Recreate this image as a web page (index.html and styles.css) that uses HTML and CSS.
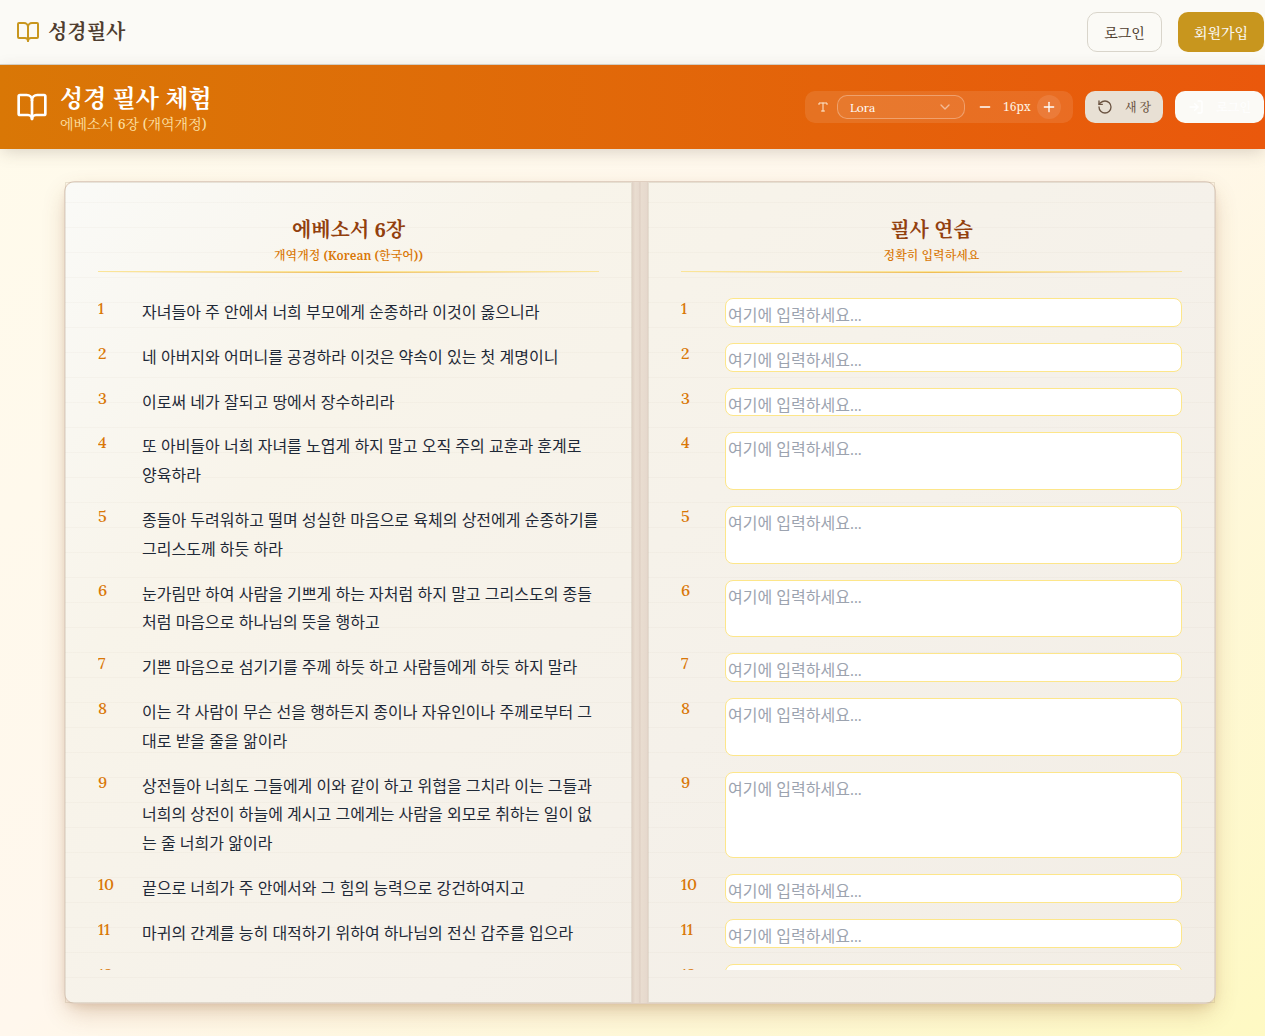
FILE: index.html
```html
<!DOCTYPE html>
<html lang="ko">
<head>
<meta charset="utf-8">
<meta name="viewport" content="width=device-width, initial-scale=1">
<title>성경필사</title>
<link rel="stylesheet" href="styles.css">
</head>
<body>
<header class="site-header">
  <a class="brand" href="#">
    <svg class="icon icon-24" viewBox="0 0 24 24"><path d="M12 7v14"/><path d="M3 18a1 1 0 0 1-1-1V4a1 1 0 0 1 1-1h5a4 4 0 0 1 4 4 4 4 0 0 1 4-4h5a1 1 0 0 1 1 1v13a1 1 0 0 1-1 1h-6a3 3 0 0 0-3 3 3 3 0 0 0-3-3z"/></svg>
    <span>성경필사</span>
  </a>
  <nav class="account">
    <button class="btn btn-outline" type="button">로그인</button>
    <button class="btn btn-gold" type="button">회원가입</button>
  </nav>
</header>

<section class="banner">
  <div class="banner-title">
    <svg class="icon icon-32" viewBox="0 0 24 24"><path d="M12 7v14"/><path d="M3 18a1 1 0 0 1-1-1V4a1 1 0 0 1 1-1h5a4 4 0 0 1 4 4 4 4 0 0 1 4-4h5a1 1 0 0 1 1 1v13a1 1 0 0 1-1 1h-6a3 3 0 0 0-3 3 3 3 0 0 0-3-3z"/></svg>
    <div>
      <h1>성경 필사 체험</h1>
      <p>에베소서 6장 (개역개정)</p>
    </div>
  </div>
  <div class="tools">
    <div class="font-tools">
      <svg class="icon icon-12" viewBox="0 0 24 24"><path d="M4 7V4h16v3"/><path d="M9 20h6"/><path d="M12 4v16"/></svg>
      <div class="font-select">
        <select aria-label="글꼴"><option>Lora</option></select>
        <svg class="icon icon-16" viewBox="0 0 24 24"><path d="m6 9 6 6 6-6"/></svg>
      </div>
      <div class="size-tools">
        <button class="round" type="button" aria-label="글자 작게"><svg class="icon icon-16" viewBox="0 0 24 24"><path d="M5 12h14"/></svg></button>
        <span class="size-value">16px</span>
        <button class="round round-filled" type="button" aria-label="글자 크게"><svg class="icon icon-16" viewBox="0 0 24 24"><path d="M5 12h14"/><path d="M12 5v14"/></svg></button>
      </div>
    </div>
    <button class="tool-btn tool-new" type="button"><svg class="icon icon-16" viewBox="0 0 24 24"><path d="M3 12a9 9 0 1 0 9-9 9.75 9.75 0 0 0-6.74 2.74L3 8"/><path d="M3 3v5h5"/></svg>새 장</button>
    <button class="tool-btn tool-login" type="button"><svg class="icon icon-16" viewBox="0 0 24 24"><path d="M15 3h4a2 2 0 0 1 2 2v14a2 2 0 0 1-2 2h-4"/><path d="m10 17 5-5-5-5"/><path d="M15 12H3"/></svg>로그인</button>
  </div>
</section>

<main class="desk">
  <div class="book">
    <section class="page">
      <header class="page-head">
        <h2>에베소서 6장</h2>
        <p>개역개정 (Korean (한국어))</p>
      </header>
      <ol class="verses">
        <li><span class="num">1</span><p>자녀들아 주 안에서 너희 부모에게 순종하라 이것이 옳으니라</p></li>
        <li><span class="num">2</span><p>네 아버지와 어머니를 공경하라 이것은 약속이 있는 첫 계명이니</p></li>
        <li><span class="num">3</span><p>이로써 네가 잘되고 땅에서 장수하리라</p></li>
        <li><span class="num">4</span><p>또 아비들아 너희 자녀를 노엽게 하지 말고 오직 주의 교훈과 훈계로 양육하라</p></li>
        <li><span class="num">5</span><p>종들아 두려워하고 떨며 성실한 마음으로 육체의 상전에게 순종하기를 그리스도께 하듯 하라</p></li>
        <li><span class="num">6</span><p>눈가림만 하여 사람을 기쁘게 하는 자처럼 하지 말고 그리스도의 종들처럼 마음으로 하나님의 뜻을 행하고</p></li>
        <li><span class="num">7</span><p>기쁜 마음으로 섬기기를 주께 하듯 하고 사람들에게 하듯 하지 말라</p></li>
        <li><span class="num">8</span><p>이는 각 사람이 무슨 선을 행하든지 종이나 자유인이나 주께로부터 그대로 받을 줄을 앎이라</p></li>
        <li><span class="num">9</span><p>상전들아 너희도 그들에게 이와 같이 하고 위협을 그치라 이는 그들과 너희의 상전이 하늘에 계시고 그에게는 사람을 외모로 취하는 일이 없는 줄 너희가 앎이라</p></li>
        <li><span class="num">10</span><p>끝으로 너희가 주 안에서와 그 힘의 능력으로 강건하여지고</p></li>
        <li><span class="num">11</span><p>마귀의 간계를 능히 대적하기 위하여 하나님의 전신 갑주를 입으라</p></li>
        <li><span class="num">12</span><p>우리의 씨름은 혈과 육을 상대하는 것이 아니요</p></li>
      </ol>
    </section>
    <div class="spine"></div>
    <section class="page">
      <header class="page-head">
        <h2>필사 연습</h2>
        <p>정확히 입력하세요</p>
      </header>
      <ol class="verses">
        <li><label class="num" for="v1">1</label><textarea id="v1" placeholder="여기에 입력하세요..."></textarea></li>
        <li><label class="num" for="v2">2</label><textarea id="v2" placeholder="여기에 입력하세요..."></textarea></li>
        <li><label class="num" for="v3">3</label><textarea id="v3" placeholder="여기에 입력하세요..."></textarea></li>
        <li><label class="num" for="v4">4</label><textarea id="v4" class="lines-2" placeholder="여기에 입력하세요..."></textarea></li>
        <li><label class="num" for="v5">5</label><textarea id="v5" class="lines-2" placeholder="여기에 입력하세요..."></textarea></li>
        <li><label class="num" for="v6">6</label><textarea id="v6" class="lines-2" placeholder="여기에 입력하세요..."></textarea></li>
        <li><label class="num" for="v7">7</label><textarea id="v7" placeholder="여기에 입력하세요..."></textarea></li>
        <li><label class="num" for="v8">8</label><textarea id="v8" class="lines-2" placeholder="여기에 입력하세요..."></textarea></li>
        <li><label class="num" for="v9">9</label><textarea id="v9" class="lines-3" placeholder="여기에 입력하세요..."></textarea></li>
        <li><label class="num" for="v10">10</label><textarea id="v10" placeholder="여기에 입력하세요..."></textarea></li>
        <li><label class="num" for="v11">11</label><textarea id="v11" placeholder="여기에 입력하세요..."></textarea></li>
        <li><label class="num" for="v12">12</label><textarea id="v12" placeholder="여기에 입력하세요..."></textarea></li>
      </ol>
    </section>
  </div>
</main>
</body>
</html>
```
FILE: styles.css
```css
:root {
  --serif: "Noto Serif", "Noto Serif CJK KR", serif;
  --lora: "Lora", "Noto Sans CJK KR", sans-serif;
}
* { box-sizing: border-box; margin: 0; padding: 0; }
body {
  display: flex;
  flex-direction: column;
  height: 100vh;
  overflow: hidden;
  font-family: var(--serif);
  color: #4f3d2f;
  background: linear-gradient(to bottom right, #fffbeb, #fff7ed 50%, #fef9c3);
}
button, select, textarea { font: inherit; color: inherit; border: 0; background: none; }
button { cursor: pointer; }
.icon { flex: none; fill: none; stroke: currentColor; stroke-width: 2; stroke-linecap: round; stroke-linejoin: round; }
.icon-12 { width: 12px; height: 12px; }
.icon-16 { width: 16px; height: 16px; }
.icon-24 { width: 24px; height: 24px; }
.icon-32 { width: 32px; height: 32px; }

.site-header {
  display: flex;
  align-items: center;
  justify-content: space-between;
  padding: 12px 1px 12px 16px;
  background: #fbfaf6;
  border-bottom: 1px solid #d9d5cb;
}
.brand { display: flex; align-items: center; gap: 8px; font-size: 20px; line-height: 30px; font-weight: 700; color: inherit; text-decoration: none; }
.brand .icon { color: #c8961e; }
.account { display: flex; gap: 16px; }
.btn { height: 40px; padding: 2px 16px 0; border-radius: 10px; font-size: 14px; line-height: 20px; font-weight: 500; }
.btn-outline { border: 1px solid #d9d5cb; }
.btn-gold { background: #c8961e; color: #fbfaf6; }

.banner {
  position: relative;
  display: flex;
  align-items: center;
  justify-content: space-between;
  padding: 16px 1px 16px 16px;
  color: #fff;
  background: linear-gradient(to right, #d97706, #ea580c);
  box-shadow: 0 4px 16px -2px rgba(74, 58, 44, .22);
}
.banner-title { display: flex; align-items: center; gap: 12px; }
.banner h1 { font-size: 24px; line-height: 34px; font-weight: 700; }
.banner p { font-size: 14px; line-height: 18px; color: #fde2a8; }
.tools { display: flex; align-items: center; gap: 12px; }
.font-tools { display: flex; align-items: center; gap: 8px; height: 32px; padding: 0 12px; border-radius: 10px; background: rgba(255, 255, 255, .1); }
.font-tools > .icon { color: #fde8d0; }
.font-select { position: relative; color: #fff; }
.font-select select { display: block; width: 128px; height: 24px; padding: 0 12px; appearance: none; border: 1px solid rgba(255, 255, 255, .3); border-radius: 10px; font-family: var(--lora); font-size: 12px; background: rgba(255, 255, 255, .05); }
.font-select .icon { position: absolute; right: 12px; top: 4px; opacity: .5; pointer-events: none; }
.size-tools { display: flex; align-items: center; }
.round { display: grid; place-items: center; width: 24px; height: 24px; border-radius: 12px; }
.round-filled { background: rgba(255, 255, 255, .1); }
.size-value { width: 40px; text-align: center; font-size: 12px; line-height: 16px; color: #fef3e4; }
.tool-btn { display: flex; align-items: center; gap: 12px; height: 32px; padding: 0 12px; border-radius: 10px; font-size: 12px; font-weight: 500; }
.tool-new { background: #e8e0d4; color: #6b5442; }
.tool-login { padding: 0 13px; background: #fbfaf6; color: #fff; }

.desk { flex: 1; min-height: 0; display: flex; padding: 33px 50px 33px 65px; }
.book {
  flex: 1;
  display: grid;
  grid-template-columns: 1fr 16px 1fr;
  grid-template-rows: minmax(0, 1fr);
  border-radius: 10px;
  background:
    repeating-linear-gradient(transparent 0 20px, rgba(120, 90, 60, .03) 20px 21px, transparent 21px 25px),
    linear-gradient(135deg, #fafaf7, #f8f4ea 25%, #f5f1ea 60%, #f2ede5);
  box-shadow: 0 0 0 1px #e0cfc0, 0 10px 25px -3px rgba(140, 80, 30, .3), 0 4px 10px -2px rgba(140, 80, 30, .14);
}
.page { display: flex; flex-direction: column; min-width: 0; padding: 32px; border: 1px solid rgba(160, 140, 110, .2); }
.spine {
  background: linear-gradient(to right, #dfd0c4, #e9ddd0 20%, #e6d9cd 45%, #d9c8bc 50%, #e9ddd0 55%, #e6d9cd 90%, #dfd0c4);
}
.page-head {
  flex: none;
  position: relative;
  padding-bottom: 7px;
  text-align: center;
  border-bottom: 1px solid #fae498;
}
.page-head::after {
  content: "";
  position: absolute;
  left: 0;
  right: 0;
  bottom: -2px;
  height: 1px;
  background: linear-gradient(to right, transparent, #f0bd55, transparent);
}
.page-head h2 { font-size: 20px; line-height: 30px; font-weight: 700; color: #92400e; }
.page-head p { font-size: 12px; line-height: 16px; margin-top: 3px; font-weight: 600; color: #d97706; }
.verses { flex: 1; min-height: 0; margin-top: 26px; overflow: hidden; list-style: none; display: flex; flex-direction: column; gap: 16px; }
.verses li { flex: none; display: grid; grid-template-columns: 32px minmax(0, 1fr); gap: 12px; font-size: 16px; }
.num { line-height: 20px; font-family: var(--lora); font-size: 16px; font-weight: 500; color: #d97706; }
.verses p, textarea { font-family: var(--lora); font-size: 16px; line-height: 1.8; }
.verses p { color: #1f2937; word-break: break-all; }
.verses textarea { display: block; width: 100%; height: 1.8em; padding: 2px; border: 1px solid #fde68a; border-radius: 8px; background: #fff; resize: none; overflow: hidden; color: #1f2937; }
.verses .lines-2 { height: 3.6em; }
.verses .lines-3 { height: 5.4em; }
textarea::placeholder { color: #9ca3af; }
```
